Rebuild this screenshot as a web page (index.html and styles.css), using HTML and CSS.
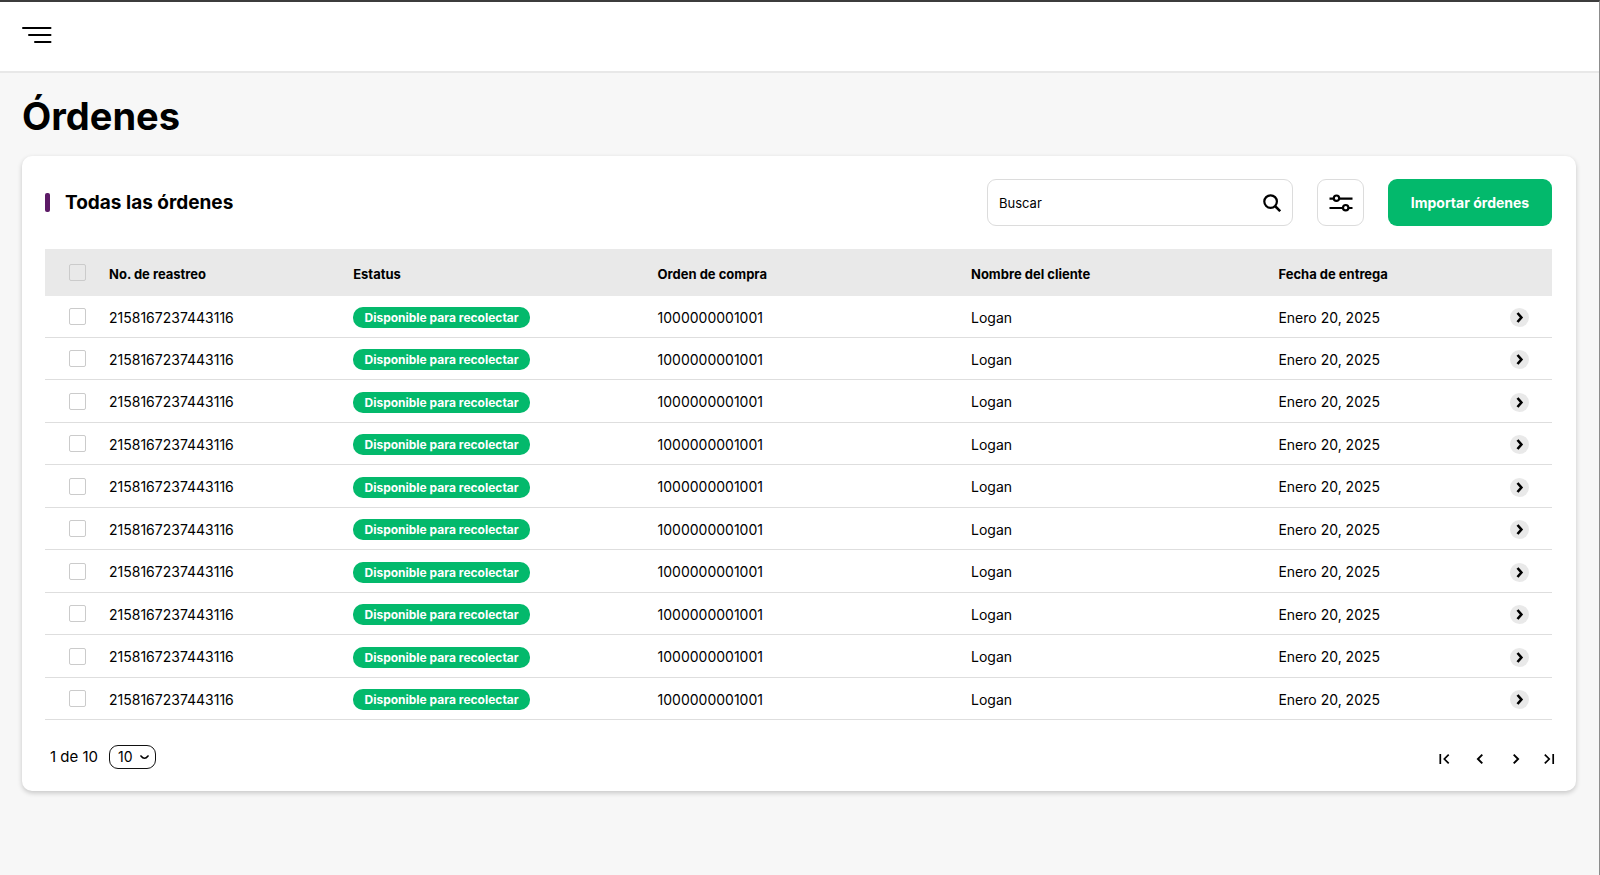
FILE: index.html
```html
<!DOCTYPE html>
<html lang="es">
<head>
<meta charset="utf-8">
<meta name="viewport" content="width=device-width, initial-scale=1">
<title>Órdenes</title>
<link rel="stylesheet" href="styles.css">
</head>
<body>
<header class="topbar">
  <button class="icon-button" type="button" aria-label="Menú">
    <svg width="30" height="18" viewBox="0 0 30 18" fill="none" stroke="#000" stroke-width="2" stroke-linecap="round"><path d="M1 2H28.5M7 9H28.5M13 16H28.5"/></svg>
  </button>
</header>
<main class="page">
  <h1 class="page-title">Órdenes</h1>
  <section class="card">
    <div class="toolbar">
      <h2 class="card-title">Todas las órdenes</h2>
      <div class="search">
        <input class="search-input" type="search" placeholder="Buscar" aria-label="Buscar">
        <button class="icon-button" type="button" aria-label="Buscar órdenes">
          <svg width="18" height="18" viewBox="0 0 18 18" fill="none" stroke="#000" stroke-width="2.2"><circle cx="7.6" cy="7.6" r="6.3"/><path d="M12 12L17.2 17.2" stroke-width="2.5"/></svg>
        </button>
      </div>
      <button class="filter" type="button" aria-label="Filtros">
        <svg width="24" height="18" viewBox="0 0 24 18" fill="none" stroke="#000" stroke-width="2.2"><path d="M.5 4.6H4.6M10.4 4.6H23.5M.5 14H13.8M19.6 14H23.5"/><circle cx="7.5" cy="4.2" r="2.7"/><circle cx="16.7" cy="13.7" r="2.7"/></svg>
      </button>
      <button class="primary" type="button">Importar órdenes</button>
    </div>
    <table class="orders">
      <colgroup><col class="col-check"><col class="col-track"><col class="col-status"><col class="col-order"><col class="col-client"><col class="col-date"></colgroup>
      <thead>
        <tr><th class="check-cell"><input class="check" type="checkbox" aria-label="Seleccionar todas"></th><th>No. de reastreo</th><th>Estatus</th><th>Orden de compra</th><th>Nombre del cliente</th><th>Fecha de entrega</th></tr>
      </thead>
      <tbody id="rows"></tbody>
    </table>
    <footer class="footer">
      <label class="page-size" for="size">1 de 10</label>
      <span class="select-box">
        <select class="size-select" id="size"><option>10</option></select>
        <svg class="caret" width="9" height="5" viewBox="0 0 9 5" fill="none" stroke="#000" stroke-width="1.6" stroke-linecap="round"><path d="M1 1Q4.5 5.6 8 1"/></svg>
      </span>
      <nav class="pager" aria-label="Paginación">
        <button class="icon-button" type="button" aria-label="Primera página"><svg width="12" height="12" viewBox="0 0 12 12" fill="none" stroke="#000" stroke-width="1.7"><path d="M2.3 1V11M10.7 1.6L6.3 6L10.7 10.4"/></svg></button>
        <button class="icon-button" type="button" aria-label="Página anterior"><svg width="12" height="12" viewBox="0 0 12 12" fill="none" stroke="#000" stroke-width="1.9"><path d="M9.3 1.6L4.9 6L9.3 10.4"/></svg></button>
        <button class="icon-button" type="button" aria-label="Página siguiente"><svg width="12" height="12" viewBox="0 0 12 12" fill="none" stroke="#000" stroke-width="1.9"><path d="M5.7 1.6L10.1 6L5.7 10.4"/></svg></button>
        <button class="icon-button" type="button" aria-label="Última página"><svg width="12" height="12" viewBox="0 0 12 12" fill="none" stroke="#000" stroke-width="1.7"><path d="M10.2 1V11M1.8 1.6L6.2 6L1.8 10.4"/></svg></button>
      </nav>
    </footer>
  </section>
</main>
<script src="app.js"></script>
</body>
</html>
```
FILE: styles.css
```css
* { box-sizing: border-box; }

body {
  margin: 0;
  min-height: 100vh;
  background: #f7f7f7;
  border-top: 2px solid #3c3c3c;
  border-right: 1px solid #8c8c8c;
  color: #000;
  font: 13px/20px Inter, Roboto, sans-serif;
}

button, input, select { font: inherit; color: inherit; }

svg { display: block; }

.icon-button {
  padding: 0;
  border: 0;
  background: none;
  cursor: pointer;
}

.topbar {
  display: flex;
  align-items: center;
  height: 71px;
  padding: 0 22px 3px;
  background: #fff;
  border-bottom: 2px solid #e8e8e8;
}

.page { padding: 21px 23px 24px 22px; }

.page-title {
  margin: 0 0 18px;
  font-size: 38px;
  line-height: 44px;
  font-weight: 700;
}

.card {
  padding: 23px 24px 22px 23px;
  background: #fff;
  border-radius: 10px;
  box-shadow: 0 2px 5px rgba(0, 0, 0, .2);
}

.toolbar {
  display: flex;
  align-items: center;
  gap: 24px;
  margin-bottom: 23px;
}

.card-title {
  display: flex;
  align-items: center;
  gap: 15px;
  flex: 1;
  margin: 0;
  font-size: 19px;
  line-height: 24px;
}

.card-title::before {
  content: "";
  width: 5px;
  height: 19px;
  border-radius: 2px;
  background: #5c1a66;
}

.search {
  display: flex;
  align-items: center;
  width: 306px;
  height: 47px;
  padding: 0 11px;
  border: 1px solid #dcdcdc;
  border-radius: 9px;
}

.search-input {
  flex: 1;
  min-width: 0;
  padding: 0;
  border: 0;
  outline: 0;
  background: none;
}

.search-input::placeholder { color: #000; opacity: 1; }

.filter {
  display: flex;
  align-items: center;
  justify-content: center;
  width: 47px;
  height: 47px;
  padding: 0;
  border: 1px solid #dcdcdc;
  border-radius: 9px;
  background: #fff;
}

.primary {
  height: 47px;
  min-width: 164px;
  padding: 0 20px;
  border: 0;
  border-radius: 9px;
  background: #03b96c;
  color: #fff;
  font-size: 14px;
  font-weight: 700;
}

.orders {
  width: 100%;
  table-layout: fixed;
  border-collapse: separate;
  border-spacing: 0;
}

.col-check { width: 64px; }
.col-track { width: 16.2%; }
.col-status { width: 20.2%; }
.col-order { width: 20.8%; }
.col-client { width: 20.4%; }

.orders th, .orders td {
  padding: 2px 0 0;
  text-align: left;
  vertical-align: middle;
}

.orders th { height: 47px; background: #e9e9e9; font-weight: 700; }
.orders td { height: 42px; border-bottom: 1px solid #dedede; font-size: 14px; }
.orders tr:nth-child(2n+3) td { height: 43px; }
.orders .check-cell { padding: 0 0 0 24px; }

.check {
  appearance: none;
  display: block;
  width: 17px;
  height: 17px;
  margin: 0;
  border: 1px solid #cbcbcb;
  border-radius: 2px;
}

.badge {
  display: block;
  width: fit-content;
  min-width: 177px;
  padding: 0 8px;
  border-radius: 10px;
  background: #03b96c;
  color: #fff;
  font-size: 12px;
  line-height: 21px;
  font-weight: 700;
  text-align: center;
}

.date-cell {
  display: flex;
  align-items: center;
  justify-content: space-between;
  padding-right: 23px;
}

.detail {
  display: flex;
  align-items: center;
  justify-content: center;
  width: 19px;
  height: 19px;
  padding: 0;
  border: 0;
  border-radius: 50%;
  background: #e9e9e9;
}

.footer {
  display: flex;
  align-items: center;
  padding: 25px 0 0 5px;
}

.page-size { margin-right: 11px; font-size: 15px; }

.select-box { position: relative; }

.size-select {
  appearance: none;
  display: block;
  width: 47px;
  height: 24px;
  padding: 0 0 0 8px;
  border: 1px solid #111;
  border-radius: 9px;
  background: #fff;
  font-size: 14px;
}

.caret {
  position: absolute;
  top: 10px;
  right: 7px;
  pointer-events: none;
}

.pager {
  display: flex;
  gap: 23px;
  margin: 0 -3px 0 auto;
  padding-top: 3px;
}
```
FILE: app.js
```js
const rows = document.getElementById("rows");
for (let i = 1; i <= 10; i++) {
  rows.insertAdjacentHTML("beforeend", `
    <tr>
      <td class="check-cell"><input class="check" type="checkbox" aria-label="Seleccionar orden ${i}"></td>
      <td>2158167237443116</td>
      <td><span class="badge">Disponible para recolectar</span></td>
      <td>1000000001001</td>
      <td>Logan</td>
      <td><div class="date-cell"><span>Enero 20, 2025</span><button class="detail" type="button" aria-label="Ver orden ${i}"><svg width="9" height="11" viewBox="0 0 9 11" fill="none" stroke="#000" stroke-width="2.6"><path d="M2.5 1L6.4 5.5L2.5 10"/></svg></button></div></td>
    </tr>`);
}
```
